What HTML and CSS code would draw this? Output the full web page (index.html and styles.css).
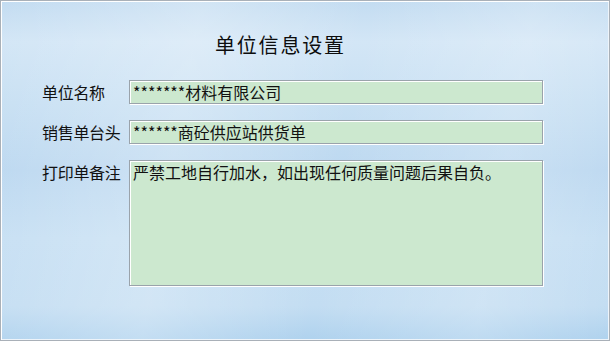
FILE: index.html
```html
<!DOCTYPE html>
<html lang="zh-CN">
<head>
    <meta charset="UTF-8">
    <meta name="viewport" content="width=device-width, initial-scale=1.0">
    <title>单位信息设置</title>
    <link rel="stylesheet" href="styles.css">
</head>
<body>
    <div class="window">
        <h1 class="title">单位信息设置</h1>
        <div class="form">
            <label class="label" for="unitName">单位名称</label>
            <div class="field" id="unitName">*******材料有限公司</div>

            <label class="label" for="billHeader">销售单台头</label>
            <div class="field" id="billHeader">******商砼供应站供货单</div>

            <label class="label label-top" for="printNote">打印单备注</label>
            <div class="field field-area" id="printNote">严禁工地自行加水，如出现任何质量问题后果自负。</div>
        </div>
    </div>
</body>
</html>
```

FILE: styles.css
```css
html, body {
    margin: 0;
    padding: 0;
}
body {
    font-family: "Noto Sans CJK SC", "Liberation Sans", sans-serif;
    color: #111;
    width: 611px;
    height: 341px;
    overflow: hidden;
}
.window {
    box-sizing: border-box;
    width: 610px;
    height: 341px;
    border: 1px solid #a9b0b8;
    box-shadow: inset 1px 1px 0 #ffffff, inset -1px -1px 0 #eef4fa;
    background:
        linear-gradient(100deg, rgba(255,255,255,0) 0%, rgba(255,255,255,0.25) 30%, rgba(255,255,255,0) 55%, rgba(255,255,255,0.2) 80%, rgba(255,255,255,0) 100%),
        linear-gradient(180deg, #c3dcf1 0%, #d3e6f6 12%, #c8e0f3 30%, #bcd8f0 50%, #c6dff3 70%, #c3ddf2 90%, #afd2ee 100%);
    padding: 31px 0 0 0;
}
.title {
    margin: 0 0 22px 214px;
    font-size: 20px;
    font-weight: normal;
    line-height: 26px;
    letter-spacing: 1.8px;
    color: #0d0d0d;
}
.form {
    display: grid;
    grid-template-columns: 87px 414px;
    grid-template-rows: 24px 24px 126px;
    row-gap: 16px;
    padding-left: 41px;
}
.label {
    font-size: 16px;
    line-height: 24px;
    letter-spacing: -0.3px;
    white-space: nowrap;
    color: #111;
}
.field {
    box-sizing: border-box;
    background: #cce8cf;
    border: 1px solid #9aa3ab;
    box-shadow: inset 1px 1px 0 #ffffff, 1px 1px 0 #ffffff;
    font-size: 16px;
    line-height: 22px;
    letter-spacing: 0;
    padding: 0 0 0 3px;
    color: #111;
    white-space: nowrap;
}
.field-area {
    white-space: normal;
}
```
